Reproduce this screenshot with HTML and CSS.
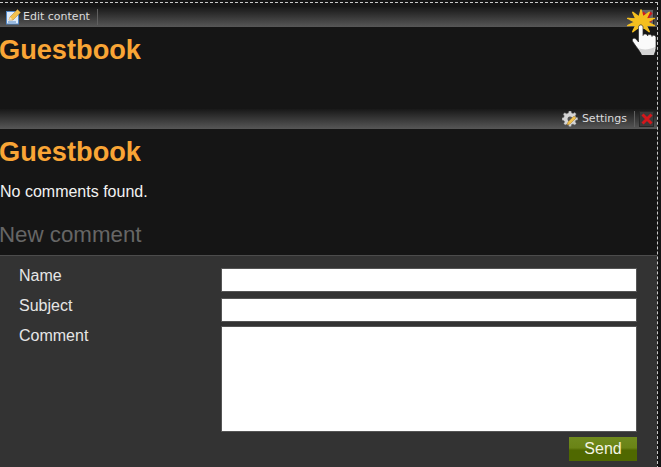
FILE: index.html
```html
<!DOCTYPE html>
<html lang="en">
<head>
<meta charset="utf-8">
<title>Guestbook</title>
<link rel="stylesheet" href="styles.css">
</head>
<body>
<div class="page">
  <section class="module module-first">
    <div class="toolbar">
      <button class="tool" type="button">
        <svg class="icon" viewBox="0 0 16 16" width="16" height="16"><rect x="1.500" y="2.500" width="12" height="12.500" fill="#dfeaf7" stroke="#4f86c6"/><path d="M3 13h8" stroke="#4f86c6"/><path d="M4 11l1-3 7.500-7.500 3 3-7.500 7.500z" fill="#f2c04e" stroke="#b98a3a" stroke-width=".6"/><path d="M4 11l1-3 2.500 2.500z" fill="#f5e3c0"/></svg>
        <span>Edit content</span>
      </button>
      <span class="sep"></span>
      <span class="spacer"></span>
      <span class="close close-hover"><svg viewBox="0 0 12 12" width="12" height="12"><path d="M1.500 1.500l9 9M10.500 1.500l-9 9" stroke="#d3171c" stroke-width="3"/></svg></span>
    </div>
    <h1 class="title">Guestbook</h1>
    <div class="cursor">
      <svg viewBox="0 0 32 50" width="32" height="50">
        <path d="M14 2L15.900 9.200 22.200 4.300 18.900 11.100 27.300 10.400 20 14 27.300 17.600 18.900 16.900 22.200 23.700 15.900 18.800 14 26 12.100 18.800 5.800 23.700 9.100 16.900 .7 17.600 8 14 .7 10.400 9.100 11.100 5.800 4.300 12.100 9.200z" fill="#f5bf1f" stroke="#f5bf1f" stroke-width="1.500" stroke-linejoin="round"/>
        <path d="M11.500 28V19.500c0-3.500 4.500-3.500 4.500 0V27.500c0-2 4.500-2 4.500 .5 0-2 4.500-2 4.500 .5 0-2 4-1.500 4 1V38c0 4-1 6-2 9H15c-2-4-5-7-9-13-2-3 1-5 3-3l2.500 3z" fill="#fafafa" stroke="#2a2a2a" stroke-width=".7"/>
        <path d="M15 47c-1-3-2-5-4-7 5 2 11 2 17-1-.2 3-.8 5-1.500 8z" fill="#d4d4d4"/>
      </svg>
    </div>
  </section>
  <section class="module">
    <div class="toolbar">
      <span class="spacer"></span>
      <button class="tool" type="button">
        <svg class="icon icon-gear" viewBox="0 0 16 16" width="16" height="16"><path d="M7 0h2l.5 2 1.500.6 1.800-1 1.400 1.400-1 1.800.6 1.500 2 .5v2l-2 .5-.6 1.500 1 1.800-1.400 1.400-1.800-1-1.500.6-.5 2H7l-.5-2-1.500-.6-1.800 1-1.400-1.400 1-1.800L1.700 9.500 0 9V7l1.700-.5.6-1.500-1-1.800 1.400-1.400 1.800 1L6.500 2z" fill="#d6d6d6" stroke="#808080" stroke-width=".5"/><circle cx="8" cy="8" r="2.500" fill="#555"/><path d="M5 14l1-3 6-6 2 2-6 6z" fill="#f0c14e" stroke="#a87a2c" stroke-width=".5"/></svg>
        <span>Settings</span>
      </button>
      <span class="sep"></span>
      <span class="close"><svg viewBox="0 0 12 12" width="12" height="12"><path d="M1.500 1.500l9 9M10.500 1.500l-9 9" stroke="#d3171c" stroke-width="3"/></svg></span>
    </div>
    <h1 class="title">Guestbook</h1>
    <p class="empty">No comments found.</p>
    <h2 class="subtitle">New comment</h2>
    <form class="form">
      <label class="label" for="name">Name</label>
      <input class="field" id="name" type="text">
      <label class="label" for="subject">Subject</label>
      <input class="field" id="subject" type="text">
      <label class="label" for="comment">Comment</label>
      <textarea class="field area" id="comment"></textarea>
      <div class="actions"><button class="send" type="button">Send</button></div>
    </form>
  </section>
</div>
</body>
</html>
```
FILE: styles.css
```css
* { box-sizing: border-box; }
html, body { margin: 0; height: 100%; background: #151515; overflow: hidden; }
body { font-family: "Liberation Sans", Arial, sans-serif; color: #f2f2f2; }
.page {
  width: 658px;
  height: 467px;
  margin-top: 2px;
  padding-top: 4px;
  border-top: 1px dashed #c8c8c8;
  border-right: 1px dashed #c8c8c8;
}
.module { position: relative; display: flex; flex-direction: column; }
.module-first { height: 102px; }
.toolbar {
  display: flex;
  align-items: center;
  height: 20px;
  background: linear-gradient(#181818, #575757);
}
.tool {
  display: flex;
  align-items: center;
  gap: 2px;
  padding: 0 0 0 5px;
  border: 0;
  background: none;
  color: #dcdcdc;
  font: 11px/16px "DejaVu Sans", sans-serif;
}
.icon { flex: none; }
.icon-gear { margin-right: 2px; }
.sep { width: 1px; height: 16px; margin: 0 4px 0 7px; background: #5f5f5f; }
.spacer { flex: 1; }
.close {
  display: flex;
  align-items: center;
  justify-content: center;
  width: 15px;
  height: 16px;
  margin-right: 3px;
  background: #3a3a3a;
  border: 1px solid #262626;
}
.close-hover { background: #666; }
.title {
  margin: 8px 0 0 -1px;
  font-size: 27.2px;
  line-height: 30px;
  font-weight: bold;
  color: #f9a536;
}
.empty { margin: 16px 0 0; font-size: 16px; line-height: 18px; color: #f2f2f2; }
.subtitle {
  margin: 21px 0 0 -1px;
  font-size: 22.3px;
  line-height: 26px;
  font-weight: normal;
  color: #666;
}
.form {
  display: grid;
  grid-template-columns: 202px 416px;
  grid-auto-rows: min-content;
  row-gap: 6px;
  margin-top: 7px;
  padding: 12px 0 0 19px;
  height: 212px;
  background: #333;
  border-top: 1px solid #4c4c4c;
}
.label { font-size: 16px; line-height: 18px; color: #e6e6e6; margin-top: -1px; }
.field {
  display: block;
  width: 416px;
  height: 24px;
  margin: 0;
  padding: 2px;
  background: #fff;
  border: 1px solid #555;
  border-radius: 0;
}
.area { height: 106px; resize: none; margin-top: -2px; }
.actions { grid-column: 2; display: flex; justify-content: flex-end; margin-top: -1px; }
.send {
  width: 68px;
  height: 24px;
  padding: 0;
  border: 0;
  background: linear-gradient(#6f8a1e, #6a8416 45%, #4f6800 55%, #4f6800);
  color: #f4f4e4;
  font: 16px "Liberation Sans", sans-serif;
}
.cursor { position: absolute; left: 627px; top: 1px; width: 32px; height: 50px; }
```
